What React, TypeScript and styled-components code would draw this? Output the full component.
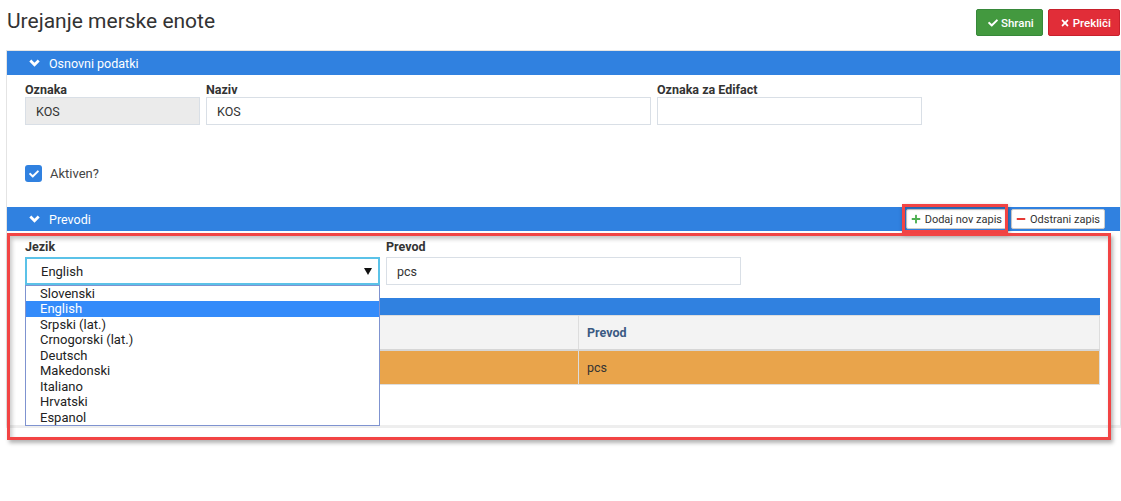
import React from 'react';
import styled, { createGlobalStyle } from 'styled-components';
import { FaCheck, FaTimes, FaPlus, FaMinus } from 'react-icons/fa';

const GlobalStyle = createGlobalStyle`
  html, body {
    margin: 0;
    background: #fff;
    font-family: Roboto, 'Liberation Sans', sans-serif;
    color: #333;
  }
`;

const Page = styled.div`
  width: 1121px;
  min-height: 501px;
  padding-left: 6px;
  box-sizing: border-box;
`;

const TopBar = styled.div`
  display: flex;
  justify-content: space-between;
  align-items: flex-start;
  height: 50px;
`;

const Title = styled.h1`
  margin: 0;
  padding: 7px 0 0 1px;
  font-size: 21px;
  line-height: 28px;
  font-weight: 400;
  color: #333;
`;

const Actions = styled.div`
  display: flex;
  gap: 5px;
  padding-top: 9px;
  padding-right: 1px;
`;

const ActionButton = styled.button<{ $variant: 'save' | 'cancel' }>`
  display: flex;
  align-items: center;
  justify-content: center;
  gap: 3px;
  height: 27px;
  padding: 0 8px 0 11px;
  border-radius: 2px;
  border: 1px solid ${({ $variant }) => ($variant === 'save' ? '#37883a' : '#c8202c')};
  background: ${({ $variant }) => ($variant === 'save' ? '#43993f' : '#e12d38')};
  color: #fff;
  font-family: inherit;
  font-size: 11.5px;
  font-weight: 500;
  cursor: pointer;
`;

const Panel = styled.div`
  border: 1px solid #e4e4e4;
  border-bottom: 3px solid #eee;
`;

const Section = styled.section`
  position: relative;
`;

const SectionHeader = styled.div`
  display: flex;
  align-items: center;
  height: 24px;
  padding: 0 15px 0 22px;
  background: #3081e0;
  color: #fff;
  font-size: 12.5px;
`;

const HeaderTitle = styled.span`
  display: flex;
  align-items: center;
  gap: 9px;
  flex: 1;
`;

const HeaderTools = styled.div`
  display: flex;
  gap: 4px;
`;

const ToolButton = styled.button`
  display: flex;
  align-items: center;
  gap: 4px;
  height: 20px;
  padding: 0 4px 0 4px;
  background: #fff;
  border: 1px solid #ccc;
  border-radius: 2px;
  color: #333;
  font-family: inherit;
  font-size: 11px;
  cursor: pointer;
`;

// red callout frame drawn over the element it marks
const Marked = styled.div`
  position: relative;

  &::after {
    content: '';
    position: absolute;
    top: -5px;
    left: -4px;
    right: -1px;
    bottom: -4px;
    border: 3px solid #f24444;
    box-shadow: 1px 2px 4px rgba(0, 0, 0, 0.35), inset 1px 2px 3px rgba(0, 0, 0, 0.25);
    pointer-events: none;
  }
`;

const Callout = styled.div`
  position: absolute;
  left: 0;
  top: 26px;
  width: 1104px;
  height: 207px;
  box-sizing: border-box;
  border: 3px solid #f24444;
  box-shadow: 2px 3px 4px rgba(0, 0, 0, 0.3), inset 2px 3px 4px rgba(0, 0, 0, 0.22);
  pointer-events: none;
  z-index: 10;
`;

const Body = styled.div<{ $pad: string }>`
  padding: ${({ $pad }) => $pad};
`;

const FieldRow = styled.div`
  display: flex;
  gap: 6px;
`;

const Field = styled.div<{ $width: number; $gap?: number }>`
  position: relative;
  width: ${({ $width }) => $width}px;
  display: flex;
  flex-direction: column;
  gap: ${({ $gap }) => $gap ?? 0}px;
`;

const Label = styled.label`
  font-size: 12.5px;
  line-height: 15px;
  font-weight: 700;
  color: #333;
`;

const Input = styled.div<{ $disabled?: boolean }>`
  height: 28px;
  box-sizing: border-box;
  display: flex;
  align-items: center;
  padding-left: 10px;
  border: 1px solid #d9dfe6;
  background: ${({ $disabled }) => ($disabled ? '#ebebeb' : '#fff')};
  font-size: 12.5px;
  color: #333;
`;

const Select = styled.div`
  height: 28px;
  box-sizing: border-box;
  display: flex;
  align-items: center;
  justify-content: space-between;
  padding: 0 6px 0 14px;
  border: 2px solid #5bc2e8;
  background: #fff;
  font-size: 13px;
  color: #222;
`;

const OptionList = styled.ul`
  position: absolute;
  top: 100%;
  left: 0;
  width: 100%;
  box-sizing: border-box;
  margin: 0;
  padding: 0;
  list-style: none;
  background: #fff;
  border: 1px solid #7f93d0;
  z-index: 5;
`;

const Option = styled.li<{ $active?: boolean }>`
  height: 15.45px;
  line-height: 15.45px;
  padding-left: 14px;
  font-size: 13px;
  background: ${({ $active }) => ($active ? '#348bfa' : 'transparent')};
  color: ${({ $active }) => ($active ? '#fff' : '#222')};
`;

const CheckRow = styled.div`
  display: flex;
  align-items: center;
  gap: 8px;
  margin-top: 40px;
  font-size: 13px;
  color: #444;
`;

const CheckBox = styled.span`
  width: 17px;
  height: 17px;
  display: flex;
  align-items: center;
  justify-content: center;
  border-radius: 3px;
  background: #3081e0;
  color: #fff;
`;

const Grid = styled.div`
  margin-top: 13px;
`;

const GridBar = styled.div`
  height: 17px;
  background: #3081e0;
`;

const Table = styled.table`
  width: 100%;
  border-collapse: collapse;
  border: 1px solid #ddd;
  font-size: 12.5px;
`;

const HeadCell = styled.th<{ $width?: number }>`
  width: ${({ $width }) => ($width ? `${$width}px` : 'auto')};
  height: 33px;
  padding: 0 8px;
  text-align: left;
  background: #f3f3f3;
  border-right: 1px solid #ddd;
  border-bottom: 2px solid #d6d6d6;
  color: #3b5a83;
  font-weight: 700;
`;

const Cell = styled.td`
  height: 33px;
  padding: 0 8px;
  background: #e9a44b;
  border-right: 1px solid #ddd;
  border-bottom: 1px solid #ddd;
  color: #333;
`;

const Chevron = () => (
  <svg width="11" height="8" viewBox="0 0 11 8">
    <path d="M1.3 1.5l4.2 4.2 4.2-4.2" fill="none" stroke="#fff" strokeWidth="2.8" />
  </svg>
);

const Caret = () => (
  <svg width="8" height="7" viewBox="0 0 8 7">
    <path d="M0 0h8L4 7z" fill="#111" />
  </svg>
);

const languages = [
  'Slovenski',
  'English',
  'Srpski (lat.)',
  'Crnogorski (lat.)',
  'Deutsch',
  'Makedonski',
  'Italiano',
  'Hrvatski',
  'Espanol',
];

export default function App() {
  const selected = 'English';

  return (
    <Page>
      <GlobalStyle />
      <TopBar>
        <Title>Urejanje merske enote</Title>
        <Actions>
          <ActionButton $variant="save">
            <FaCheck size={10} /> Shrani
          </ActionButton>
          <ActionButton $variant="cancel">
            <FaTimes size={10} /> Prekliči
          </ActionButton>
        </Actions>
      </TopBar>

      <Panel>
        <Section>
          <SectionHeader>
            <HeaderTitle>
              <Chevron /> Osnovni podatki
            </HeaderTitle>
          </SectionHeader>
          <Body $pad="7px 18px 25px">
            <FieldRow>
              <Field $width={175}>
                <Label>Oznaka</Label>
                <Input $disabled>KOS</Input>
              </Field>
              <Field $width={445}>
                <Label>Naziv</Label>
                <Input>KOS</Input>
              </Field>
              <Field $width={265}>
                <Label>Oznaka za Edifact</Label>
                <Input />
              </Field>
            </FieldRow>
            <CheckRow>
              <CheckBox>
                <FaCheck size={10} />
              </CheckBox>
              Aktiven?
            </CheckRow>
          </Body>
        </Section>

        <Section>
          <SectionHeader>
            <HeaderTitle>
              <Chevron /> Prevodi
            </HeaderTitle>
            <HeaderTools>
              <Marked>
                <ToolButton>
                  <FaPlus size={10} color="#4caf50" /> Dodaj nov zapis
                </ToolButton>
              </Marked>
              <ToolButton>
                <FaMinus size={10} color="#e53935" /> Odstrani zapis
              </ToolButton>
            </HeaderTools>
          </SectionHeader>
          <Body $pad="8px 20px 40px 18px">
            <FieldRow>
              <Field $width={355} $gap={3}>
                <Label>Jezik</Label>
                <Select>
                  {selected}
                  <Caret />
                </Select>
                <OptionList>
                  {languages.map((lang) => (
                    <Option key={lang} $active={lang === selected}>
                      {lang}
                    </Option>
                  ))}
                </OptionList>
              </Field>
              <Field $width={355} $gap={3}>
                <Label>Prevod</Label>
                <Input>pcs</Input>
              </Field>
            </FieldRow>
            <Grid>
              <GridBar />
              <Table>
                <thead>
                  <tr>
                    <HeadCell $width={536} />
                    <HeadCell>Prevod</HeadCell>
                  </tr>
                </thead>
                <tbody>
                  <tr>
                    <Cell />
                    <Cell>pcs</Cell>
                  </tr>
                </tbody>
              </Table>
            </Grid>
          </Body>
          <Callout />
        </Section>
      </Panel>
    </Page>
  );
}
